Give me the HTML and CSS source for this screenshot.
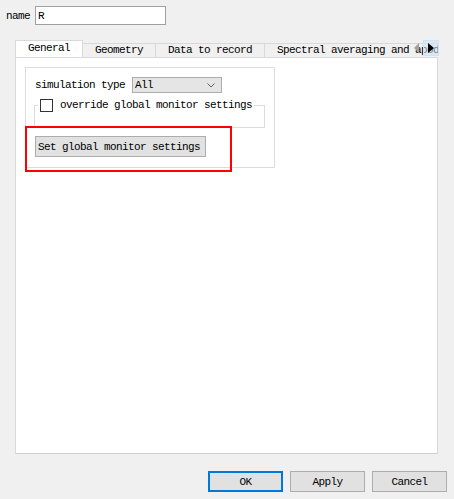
FILE: index.html
```html
<!DOCTYPE html>
<html lang="en">
<head>
    <meta charset="UTF-8">
    <title>Monitor properties</title>
    <link rel="stylesheet" href="styles.css">
</head>
<body>
    <div class="dialog">
        <div class="name-row">
            <label class="name-label">name</label>
            <input class="name-input" type="text" value="R">
        </div>

        <div class="tabs">
            <div class="tab-strip">
                <div class="tab active">General</div>
                <div class="tab">Geometry</div>
                <div class="tab">Data to record</div>
                <div class="tab">Spectral averaging and apod</div>
            </div>
            <!-- scroll arrows sit over the clipped last tab -->
            <div class="tab-scroll">
                <span class="arrow arrow-left"></span>
                <span class="arrow-box"><span class="arrow arrow-right"></span></span>
            </div>
        </div>

        <div class="panel">
            <div class="group">
                <div class="sim-row">
                    <span>simulation type</span>
                    <div class="select">
                        <span>All</span>
                        <svg class="chevron" width="8" height="5" viewBox="0 0 8 5">
                            <path d="M0.5 0.5 L4 4 L7.5 0.5" fill="none" stroke="#606060" stroke-width="1"/>
                        </svg>
                    </div>
                </div>
                <fieldset class="override">
                    <legend><span class="checkbox"></span>override global monitor settings</legend>
                </fieldset>
                <button class="set-btn">Set global monitor settings</button>
            </div>
        </div>

        <div class="footer">
            <button class="btn btn-default">OK</button>
            <button class="btn">Apply</button>
            <button class="btn">Cancel</button>
        </div>

        <!-- red annotation box -->
        <div class="highlight"></div>
    </div>
</body>
</html>
```

FILE: styles.css
```css
/* Reset */
* {
    margin: 0;
    padding: 0;
    box-sizing: border-box;
}

body {
    background: #f0f0f0;
    font-family: "Liberation Mono", "DejaVu Sans Mono", monospace;
    font-size: 11px;
    letter-spacing: -0.6px;
    color: #000;
}

.dialog {
    position: relative;
    width: 454px;
    height: 499px;
}

/* Name field */
.name-row {
    display: flex;
    align-items: center;
    padding: 6px 0 0 6px;
}

.name-label {
    width: 29px;
}

.name-input {
    width: 131px;
    height: 19px;
    border: 1px solid #a0a0a0;
    background: #fff;
    padding: 0 2px;
    font: inherit;
    letter-spacing: inherit;
    color: #000;
    outline: none;
}

/* Tabs */
.tabs {
    position: relative;
    margin: 15px 16px 0 15px;
}

.tab-strip {
    display: flex;
    align-items: flex-end;
    height: 17px;
    overflow: hidden;
}

.tab {
    flex: none;
    height: 14px;
    line-height: 13px;
    padding: 0 12px;
    border: 1px solid #d9d9d9;
    border-bottom: none;
    border-right: none;
    background: #f0f0f0;
    white-space: nowrap;
}

.tab.active {
    height: 18px;
    line-height: 15px;
    margin-bottom: -1px;
    background: #fff;
    border-right: 1px solid #d9d9d9;
    position: relative;
    z-index: 1;
}

.tab.active + .tab {
    border-left: none;
}

.tab-scroll {
    position: absolute;
    top: 0;
    right: -1px;
    display: flex;
    align-items: center;
    gap: 4px;
    height: 16px;
}

.arrow {
    width: 0;
    height: 0;
    border-top: 5px solid transparent;
    border-bottom: 5px solid transparent;
}

.arrow-left {
    border-right: 5px solid #a0a0a0;
}

.arrow-right {
    border-left: 6px solid #000;
}

.arrow-box {
    display: flex;
    align-items: center;
    justify-content: center;
    width: 16px;
    height: 16px;
    background: rgba(204, 228, 247, 0.55);
    border: 1px solid #cce4f7;
}

/* Page panel */
.panel {
    margin: 0 16px 0 15px;
    height: 397px;
    background: #fff;
    border: 1px solid #d9d9d9;
    border-bottom-color: #cfcfcf;
    padding: 9px;
}

.group {
    width: 250px;
    height: 101px;
    border: 1px solid #dcdcdc;
    padding: 9px 0 0 9px;
}

.sim-row {
    display: flex;
    align-items: center;
    height: 16px;
}

.select {
    display: flex;
    align-items: center;
    justify-content: space-between;
    width: 90px;
    height: 16px;
    margin-left: 7px;
    padding: 0 6px 0 2px;
    background: #e5e5e5;
    border: 1px solid #adadad;
}

.override {
    margin: 5px 0 0 -1px;
    width: 231px;
    height: 30px;
    border: 1px solid #dcdcdc;
    padding: 0;
}

.override legend {
    display: flex;
    align-items: center;
    height: 14px;
    margin-left: 3px;
    padding: 0 2px 0 2px;
}

.checkbox {
    width: 13px;
    height: 13px;
    margin-right: 7px;
    background: #fff;
    border: 1px solid #333;
}

.set-btn {
    display: block;
    margin-top: 8px;
    width: 171px;
    height: 21px;
    background: #e1e1e1;
    border: 1px solid #adadad;
    font: inherit;
    letter-spacing: inherit;
    color: #000;
    text-align: left;
    padding-left: 2px;
}

/* Dialog buttons */
.footer {
    display: flex;
    justify-content: flex-end;
    gap: 7px;
    margin-top: 17px;
    padding-right: 7px;
}

.btn {
    width: 75px;
    height: 21px;
    background: #e1e1e1;
    border: 1px solid #adadad;
    font: inherit;
    letter-spacing: inherit;
    color: #000;
}

.btn-default {
    border: 2px solid #0078d7;
}

/* Annotation */
.highlight {
    position: absolute;
    left: 25px;
    top: 126px;
    width: 207px;
    height: 46px;
    border: 2px solid #ff0000;
}
```
